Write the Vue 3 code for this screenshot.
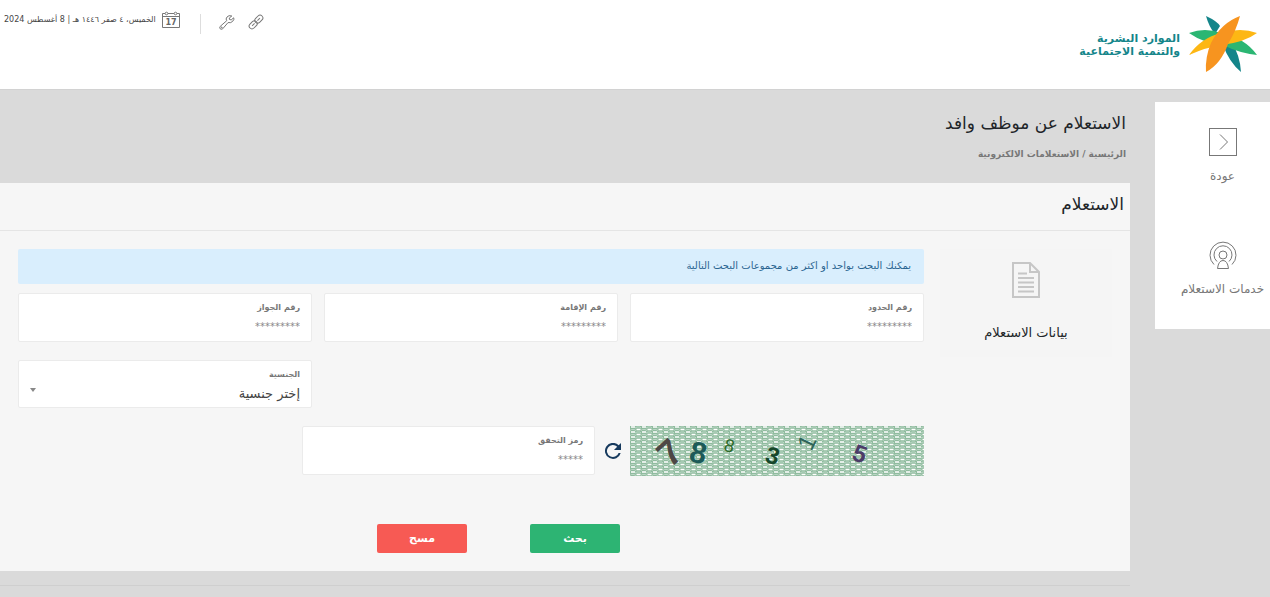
<script setup>
import { ref } from 'vue'

const idFields = [
  { id: 'border', label: 'رقم الحدود' },
  { id: 'iqama', label: 'رقم الإقامة' },
  { id: 'passport', label: 'رقم الجواز' },
]
const values = ref({ border: '', iqama: '', passport: '' })
const nationality = ref('')
const code = ref('')

const captcha = [
  { ch: '7', x: 42, y: 38, size: 36, turn: -42, color: '#4d4745', weight: 700 },
  { ch: '8', x: 68, y: 37, size: 30, turn: 12, color: '#1c5a58', weight: 700 },
  { ch: '8', x: 100, y: 26, size: 18, turn: 14, color: '#2d6b2a', weight: 400 },
  { ch: '3', x: 143, y: 38, size: 24, turn: 16, color: '#16472a', weight: 700 },
  { ch: '1', x: 176, y: 25, size: 24, turn: -64, color: '#2e6459', weight: 400 },
  { ch: '5', x: 230, y: 36, size: 24, turn: 20, color: '#4c3c68', weight: 700 },
]

function clearForm() {
  values.value = { border: '', iqama: '', passport: '' }
  nationality.value = ''
  code.value = ''
}
</script>

<template>
  <div class="page" dir="rtl">
    <header class="top">
      <a class="brand" href="#">
        <span class="brand-name">الموارد البشرية<br>والتنمية الاجتماعية</span>
        <svg class="brand-mark" viewBox="0 0 68 56" aria-hidden="true">
          <path d="M17 0Q28 5 31 10L26 18Q20 11 17 0ZM34 29L42 25Q51 39 52 56Q40 46 34 29Z" fill="#14858a" />
          <path d="M0 17Q16 11 32 17Q56 22 68 39Q50 37 34 29Q14 27 0 17Z" fill="#2bb673" />
          <path d="M68 17Q52 11 32 17Q12 22 0 39Q18 31 33 29Q56 26 68 17Z" fill="#fdb714" />
          <path d="M51 0Q32 7 22 27Q16 41 17 56Q32 48 39 28Q47 15 51 0Z" fill="#f7941f" />
        </svg>
      </a>
      <div class="tools">
        <a href="#" aria-label="روابط">
          <svg width="14" height="14" viewBox="0 0 14 14" class="line">
            <g transform="rotate(-45 7 7)">
              <rect x="-1.500" y="4.200" width="9" height="5.600" rx="2.800" />
              <path d="M5 7H1.500" />
              <rect x="6.500" y="4.200" width="9" height="5.600" rx="2.800" />
              <path d="M9 7H12.500" />
            </g>
          </svg>
        </a>
        <a href="#" aria-label="أدوات">
          <svg width="16" height="15" viewBox="0 0 16 15" class="line">
            <path d="M12.8 1Q9.8-.2 8 2T7.8 5.6L1.2 11.4Q.1 12.7 1.2 13.8T3.7 13.8L9 7.6Q12 8.3 13.8 6.2T14.7 2.8L12.2 4.9L10.5 4.5L10.3 3Z" />
            <circle cx="2.7" cy="12.4" r=".5" />
          </svg>
        </a>
        <span class="rule"></span>
        <span class="today">
          <svg width="18" height="18" viewBox="0 0 18 18" class="line calendar" aria-hidden="true">
            <path d="M3 2.5H.5V16.5H17.5V2.5H15M6 2.5H12M.5 5.5H17.5" />
            <circle cx="4.5" cy="2.5" r="1.3" /><circle cx="13.5" cy="2.5" r="1.3" />
            <text x="9" y="14" text-anchor="middle">17</text>
          </svg>
          <time class="date" datetime="2024-08-08">الخميس، ٤ صفر ١٤٤٦ هـ | 8 أغسطس 2024</time>
        </span>
      </div>
    </header>

    <div class="body">
      <nav class="side">
        <a href="#">
          <svg width="28" height="28" viewBox="0 0 28 28" class="line">
            <rect x=".5" y=".5" width="27" height="27" /><path d="M11 6.5L18.5 14L11 21.5" />
          </svg>
          <span>عودة</span>
        </a>
        <a href="#">
          <svg width="28" height="28" viewBox="0 0 28 28" class="line">
            <path d="M5 23.5A13 13 0 1 1 23 23.5M8 20.5A9 9 0 1 1 20 20.5" />
            <circle cx="14" cy="14" r="4" />
            <path d="M8.5 27.5Q9.5 19.5 14 19.5T19.5 27.5Z" />
          </svg>
          <span>خدمات الاستعلام</span>
        </a>
      </nav>

      <main class="main">
        <div class="intro">
          <h1>الاستعلام عن موظف وافد</h1>
          <p class="crumbs"><a href="#">الرئيسية</a> / <a href="#">الاستعلامات الالكترونية</a></p>
        </div>

        <section class="panel">
          <h2>الاستعلام</h2>
          <div class="panel-body">
            <div class="tab">
              <svg width="28" height="36" viewBox="0 0 28 36" aria-hidden="true">
                <path d="M1 1H18L27 10V35H1ZM18 1V10H27M6 11.5H15M6 16H22M6 20.5H22M6 25H22M6 29.5H22" fill="none" stroke="#c6c6c6" stroke-width="2" />
              </svg>
              <span>بيانات الاستعلام</span>
            </div>

            <form class="form" @submit.prevent>
              <p class="notice">يمكنك البحث بواحد او اكثر من مجموعات البحث التالية</p>
              <div class="grid">
                <div v-for="f in idFields" :key="f.id" class="field">
                  <label :for="f.id">{{ f.label }}</label>
                  <input :id="f.id" v-model="values[f.id]" type="text" placeholder="*********">
                </div>
              </div>
              <div class="grid">
                <div class="field nationality">
                  <label for="nationality">الجنسية</label>
                  <select id="nationality" v-model="nationality">
                    <option value="">إختر جنسية</option>
                  </select>
                  <span class="caret"></span>
                </div>
              </div>
              <div class="verify">
                <svg class="captcha" viewBox="0 0 294 50" preserveAspectRatio="xMidYMid slice" role="img" aria-label="رمز التحقق">
                  <defs>
                    <pattern id="weave" width="11" height="5" patternUnits="userSpaceOnUse">
                      <rect width="11" height="5" fill="#8fbb9e" />
                      <path d="M1 1H5M6.500 3.500H10.500" stroke="#fff" stroke-width="1.400" />
                      <path d="M5 2L7 1H10L11 2M0 4.500L1.500 3.500H4L6 4.500" fill="none" stroke="#cfe2d5" stroke-width=".7" />
                    </pattern>
                  </defs>
                  <rect width="294" height="50" fill="url(#weave)" />
                  <text
                    v-for="(c, i) in captcha" :key="i" :x="c.x" :y="c.y" :font-size="c.size" :font-weight="c.weight"
                    :fill="c.color" :transform="`rotate(${c.turn} ${c.x} ${c.y - 9})`" text-anchor="middle"
                  >{{ c.ch }}</text>
                </svg>
                <button type="button" class="refresh" aria-label="تحديث الرمز">
                  <svg width="16" height="16" viewBox="0 0 16 16">
                    <path d="M13.7 2.3A8 8 0 1 0 15.7 10H13.6A6 6 0 1 1 12.2 3.8L9 7H16V0Z" fill="#173a5e" />
                  </svg>
                </button>
                <div class="field">
                  <label for="code">رمز التحقق</label>
                  <input id="code" v-model="code" type="text" placeholder="*****">
                </div>
              </div>
              <div class="actions">
                <button type="submit" class="go">بحث</button>
                <button type="button" class="clear" @click="clearForm">مسح</button>
              </div>
            </form>
          </div>
        </section>
        <hr class="foot">
      </main>
    </div>
  </div>
</template>

<style>
body {
  background: #dadada;
}
</style>

<style scoped>
.page {
  font-family: "DejaVu Sans", sans-serif;
  color: #212529;
  min-height: 100vh;
  overflow: hidden;
}
.page * {
  box-sizing: border-box;
}
a {
  color: inherit;
  text-decoration: none;
}
.line {
  fill: none;
  stroke: #777;
  stroke-width: 1;
  overflow: visible;
}
.top {
  display: flex;
  justify-content: space-between;
  align-items: flex-start;
  height: 90px;
  padding: 0 13px 0 4px;
  background: #fff;
  border-bottom: 1px solid #d2d2d2;
}
.brand {
  display: flex;
  flex-direction: row-reverse;
  gap: 9px;
  padding-top: 16px;
}
.brand-name {
  padding-top: 16px;
  font-size: 11px;
  font-weight: 700;
  line-height: 13px;
  color: #14858a;
}
.brand-mark {
  width: 68px;
  height: 56px;
}
.tools {
  display: flex;
  align-items: center;
  height: 24px;
  margin-top: 10px;
  gap: 14px;
}
.tools a {
  display: block;
  line-height: 0;
}
.rule {
  width: 1px;
  height: 20px;
  margin: 4px 4px 0 6px;
  background: #ddd;
}
.today {
  display: flex;
  align-items: center;
  gap: 6px;
  margin-bottom: 4px;
}
.calendar text {
  font-size: 8px;
  font-weight: 700;
  fill: #666;
  stroke: none;
}
.date {
  font-size: 8px;
  line-height: 20px;
  color: #444;
  white-space: nowrap;
}
.body {
  display: flex;
  align-items: flex-start;
  gap: 25px;
  padding-top: 12px;
}
.side {
  flex: 0 0 115px;
  display: flex;
  flex-direction: column;
  gap: 55px;
  padding: 26px 0 30px 20px;
  background: #fff;
  font-size: 12px;
  color: #777;
}
.side a {
  display: flex;
  flex-direction: column;
  align-items: center;
  gap: 10px;
  line-height: 20px;
  white-space: nowrap;
}
.main {
  flex: 1;
  min-width: 0;
}
.intro {
  height: 81px;
  padding: 8px 4px 0 0;
}
h1,
h2 {
  margin: 0;
  font-size: 17px;
  font-weight: 400;
  line-height: 26px;
}
.crumbs {
  margin: 8px 0 0;
  font-size: 9px;
  font-weight: 700;
  line-height: 20px;
  color: #777;
}
.panel {
  background: #f6f6f6;
}
h2 {
  height: 48px;
  padding: 8px 6px 0;
  border-bottom: 1px solid #e5e5e5;
}
.panel-body {
  display: flex;
  align-items: flex-start;
  gap: 16px;
  padding: 18px;
}
.tab {
  flex: 0 0 172px;
  display: flex;
  flex-direction: column;
  align-items: center;
  gap: 25px;
  height: 108px;
  padding-top: 13px;
  background: #f5f5f5;
  font-size: 13px;
  line-height: 20px;
}
.form {
  flex: 1;
  min-width: 0;
}
.notice {
  height: 35px;
  margin: 0 0 9px;
  padding: 0 13px;
  border-radius: 2px;
  background: #d9eefd;
  color: #2b6591;
  font-size: 10px;
  line-height: 34px;
}
.grid {
  display: grid;
  grid-template-columns: repeat(3, 1fr);
  gap: 12px;
  margin-bottom: 18px;
}
.field {
  position: relative;
  height: 49px;
  padding: 5px 11px 0;
  background: #fff;
  border: 1px solid #ebebeb;
  border-radius: 2px;
}
.field label {
  display: block;
  font-size: 8px;
  font-weight: 700;
  line-height: 18px;
  color: #777;
}
.field input,
.field select {
  display: block;
  width: 100%;
  height: 20px;
  padding: 0;
  border: 0;
  outline: 0;
  background: transparent;
  appearance: none;
  font: 10px/20px "DejaVu Sans", sans-serif;
  color: #444;
}
.field input::placeholder {
  color: #888;
  opacity: 1;
}
.field select {
  font-size: 13px;
}
.field.nationality {
  grid-column: 3;
  height: 48px;
}
.caret {
  position: absolute;
  left: 11px;
  top: 27px;
  border: 3px solid transparent;
  border-top: 4px solid #888;
  border-bottom: 0;
}
.verify {
  display: grid;
  grid-template-columns: 294fr 35px 293fr 284fr;
}
.captcha {
  display: block;
  width: 100%;
  height: 50px;
  direction: ltr;
  font-family: "Liberation Sans", sans-serif;
}
.refresh {
  display: grid;
  place-items: center;
  padding: 0;
  border: 0;
  background: none;
}
.actions {
  display: flex;
  justify-content: center;
  gap: 63px;
  padding: 48px 0 0;
  margin-left: 55px;
}
.actions button {
  width: 90px;
  height: 29px;
  padding: 0;
  border: 0;
  border-radius: 2px;
  color: #fff;
  font: 700 11px/26px "DejaVu Sans", sans-serif;
}
.go {
  background: #2db473;
}
.clear {
  background: #f75a54;
}
.foot {
  height: 1px;
  margin: 14px 0 0;
  border: 0;
  background: #cfcfcf;
}
</style>
